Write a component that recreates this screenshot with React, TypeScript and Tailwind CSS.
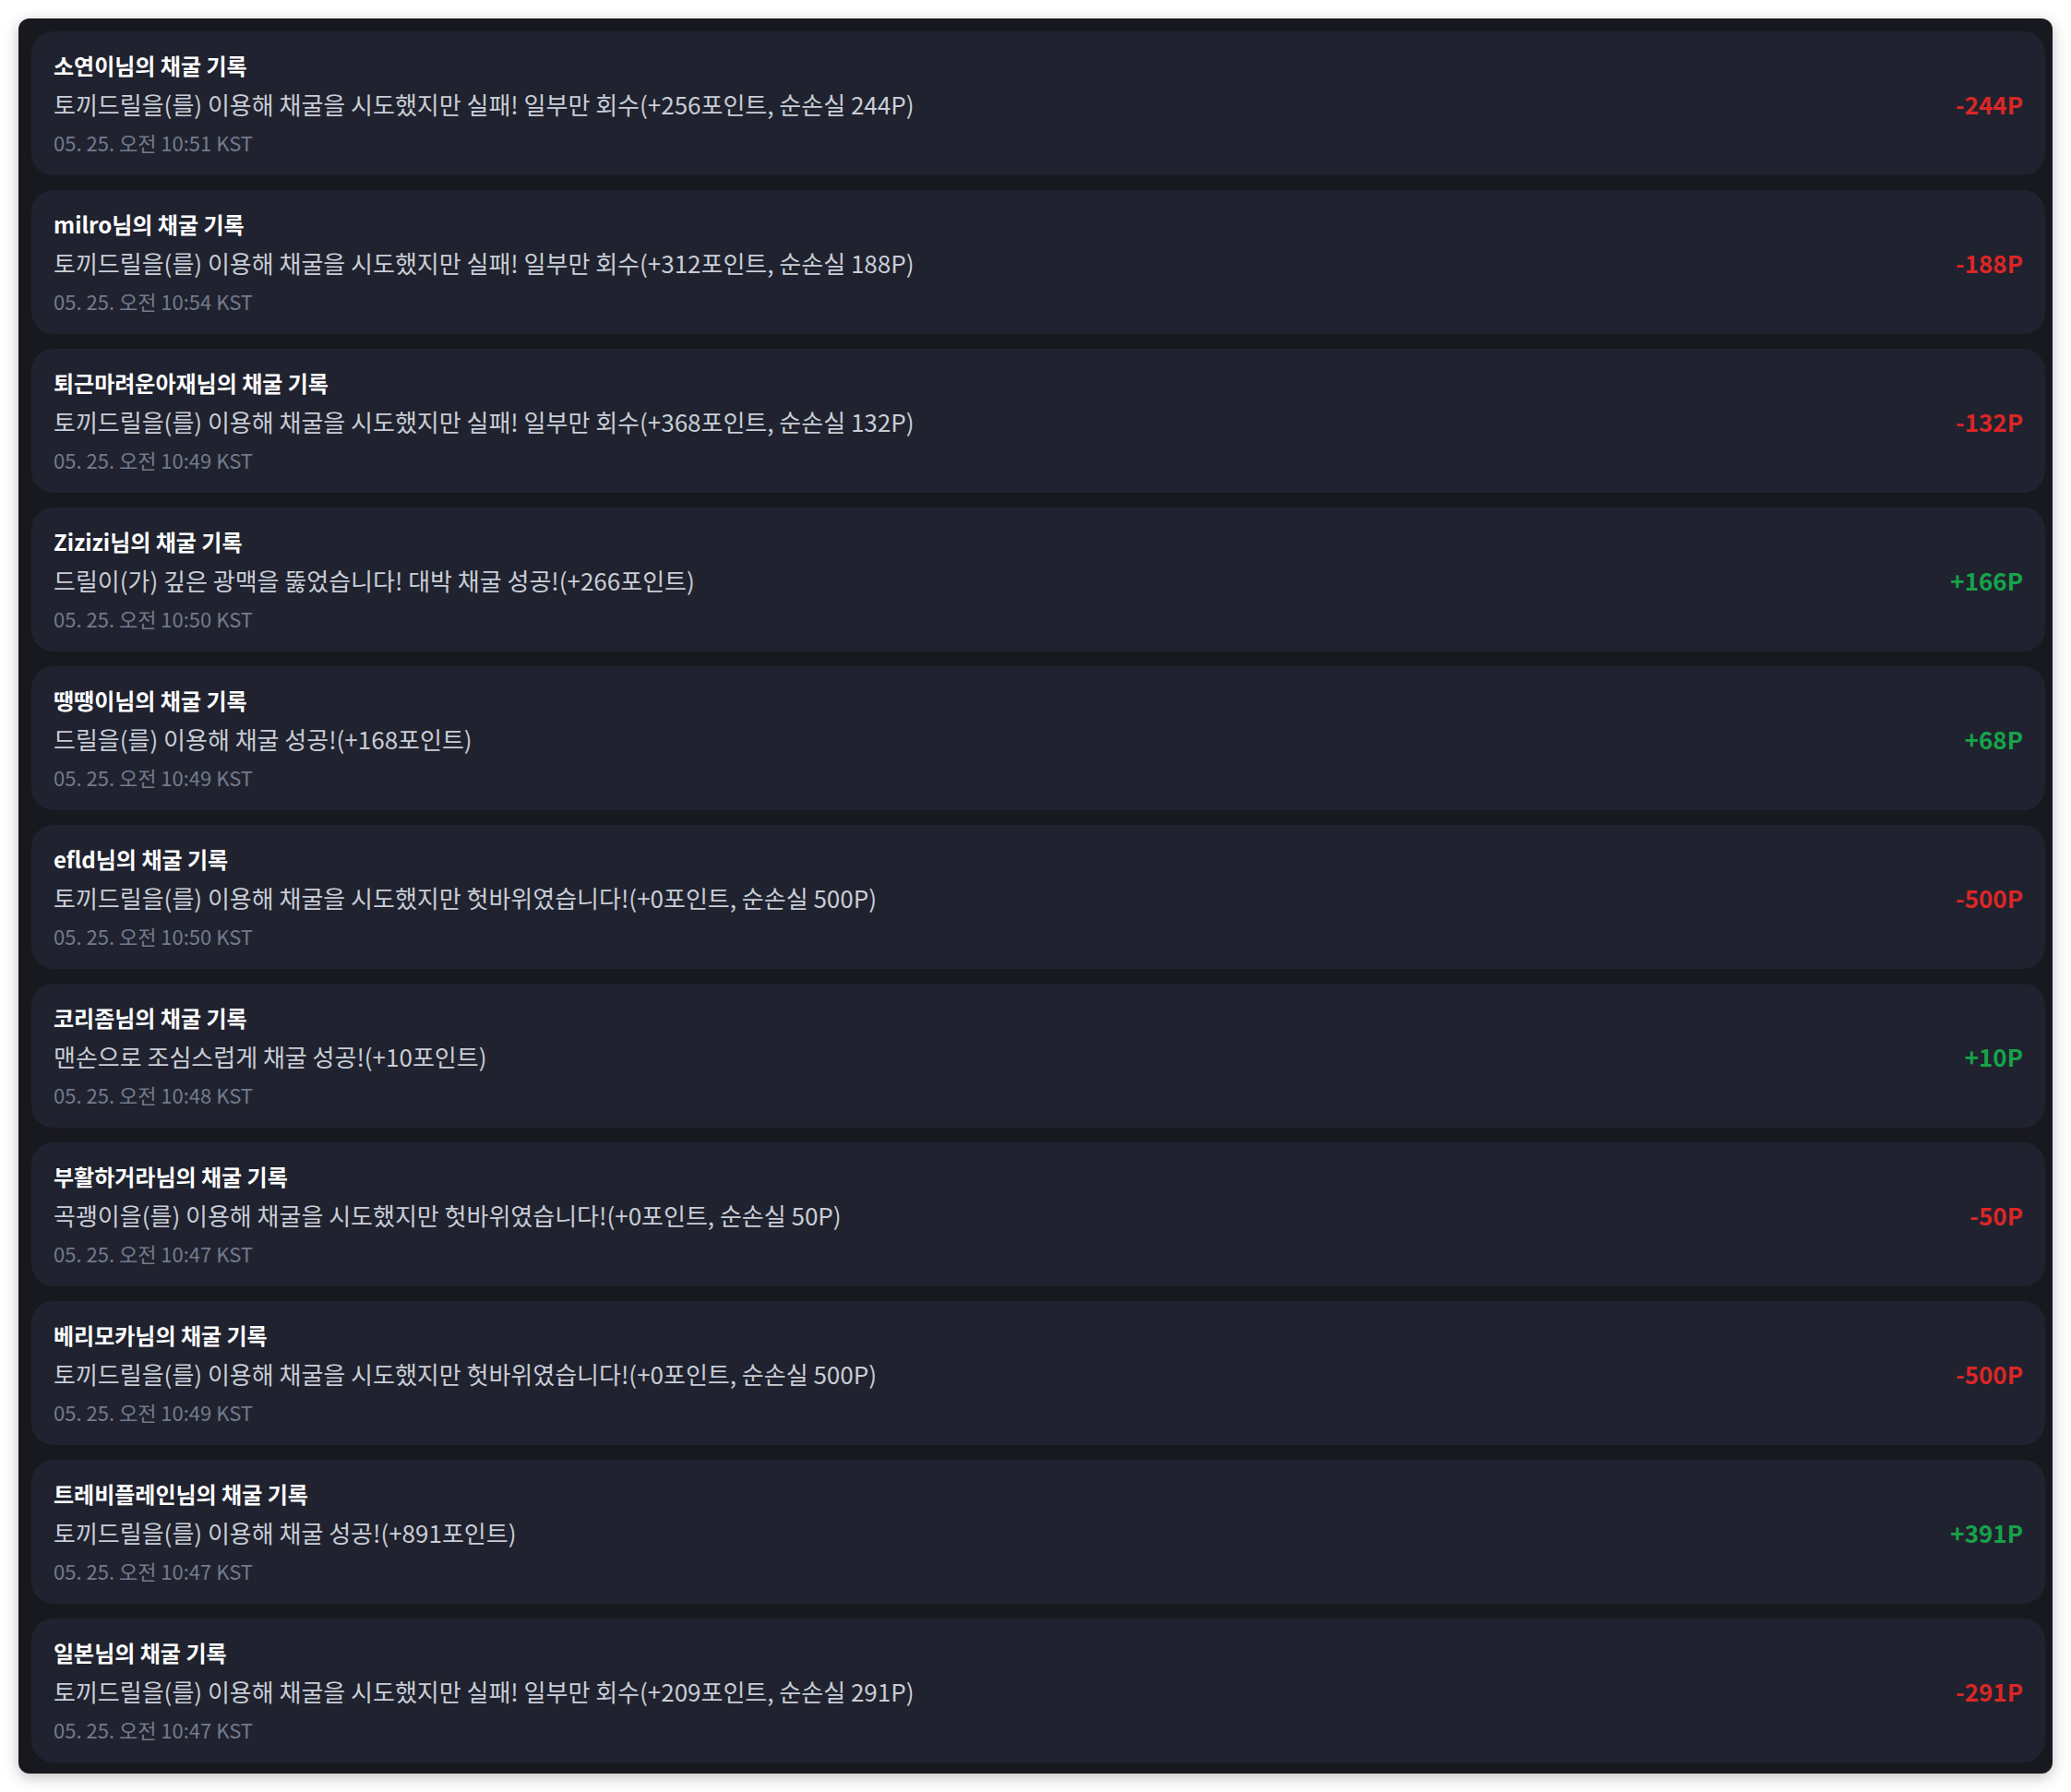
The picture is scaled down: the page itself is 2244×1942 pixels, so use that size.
import React from 'react';

type Record = { name: string; message: string; time: string; amount: number };

const records: Record[] = [
  { name: '소연이', message: '토끼드릴을(를) 이용해 채굴을 시도했지만 실패! 일부만 회수(+256포인트, 순손실 244P)', time: '05. 25. 오전 10:51 KST', amount: -244 },
  { name: 'milro', message: '토끼드릴을(를) 이용해 채굴을 시도했지만 실패! 일부만 회수(+312포인트, 순손실 188P)', time: '05. 25. 오전 10:54 KST', amount: -188 },
  { name: '퇴근마려운아재', message: '토끼드릴을(를) 이용해 채굴을 시도했지만 실패! 일부만 회수(+368포인트, 순손실 132P)', time: '05. 25. 오전 10:49 KST', amount: -132 },
  { name: 'Zizizi', message: '드릴이(가) 깊은 광맥을 뚫었습니다! 대박 채굴 성공!(+266포인트)', time: '05. 25. 오전 10:50 KST', amount: 166 },
  { name: '땡땡이', message: '드릴을(를) 이용해 채굴 성공!(+168포인트)', time: '05. 25. 오전 10:49 KST', amount: 68 },
  { name: 'efld', message: '토끼드릴을(를) 이용해 채굴을 시도했지만 헛바위였습니다!(+0포인트, 순손실 500P)', time: '05. 25. 오전 10:50 KST', amount: -500 },
  { name: '코리좀', message: '맨손으로 조심스럽게 채굴 성공!(+10포인트)', time: '05. 25. 오전 10:48 KST', amount: 10 },
  { name: '부활하거라', message: '곡괭이을(를) 이용해 채굴을 시도했지만 헛바위였습니다!(+0포인트, 순손실 50P)', time: '05. 25. 오전 10:47 KST', amount: -50 },
  { name: '베리모카', message: '토끼드릴을(를) 이용해 채굴을 시도했지만 헛바위였습니다!(+0포인트, 순손실 500P)', time: '05. 25. 오전 10:49 KST', amount: -500 },
  { name: '트레비플레인', message: '토끼드릴을(를) 이용해 채굴 성공!(+891포인트)', time: '05. 25. 오전 10:47 KST', amount: 391 },
  { name: '일본', message: '토끼드릴을(를) 이용해 채굴을 시도했지만 실패! 일부만 회수(+209포인트, 순손실 291P)', time: '05. 25. 오전 10:47 KST', amount: -291 },
];

export default function App() {
  return (
    <div
      className="min-h-screen bg-white p-5"
      style={{ fontFamily: '"Noto Sans CJK KR", "Noto Sans", sans-serif' }}
    >
      <div className="flex flex-col gap-4 rounded-xl bg-[#18191f] pt-[14px] pb-3 pl-[14px] pr-2 shadow-[0_4px_16px_rgba(0,0,0,0.25)]">
        {records.map((r, i) => (
          <div
            key={i}
            className="flex h-[156px] items-center justify-between rounded-3xl bg-[#20232f] px-6"
          >
            <div className="flex flex-col">
              <h3 className="text-[24px] font-bold leading-[32px] text-white">
                {r.name}님의 채굴 기록
              </h3>
              <p className="mt-2 text-[26px] leading-[36px] text-[#c9cdd6]">{r.message}</p>
              <p className="mt-2 text-[22px] leading-[30px] text-[#737a8c]">{r.time}</p>
            </div>
            <span
              className={`text-[26px] font-bold ${
                r.amount < 0 ? 'text-[#dc2626]' : 'text-[#16a34a]'
              }`}
            >
              {r.amount > 0 ? `+${r.amount}P` : `${r.amount}P`}
            </span>
          </div>
        ))}
      </div>
    </div>
  );
}
